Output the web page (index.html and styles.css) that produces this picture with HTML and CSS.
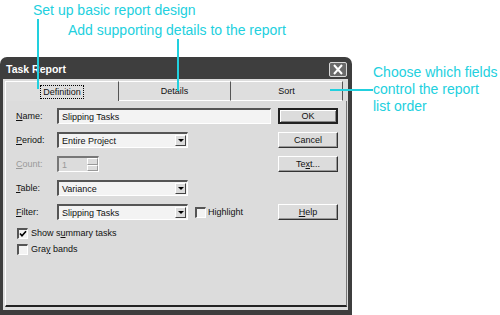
FILE: index.html
```html
<!DOCTYPE html>
<html>
<head>
	<title>Task Report</title>
	<meta charset="utf-8">
	<link rel="stylesheet" href="styles.css">
</head>
<body>
	<div class="page">
		<div class="notes">
			<p class="note note_first">Set up basic report design</p>
			<p class="note note_second">Add supporting details to the report</p>
		</div>

		<div class="main">
			<div class="dialog">
				<div class="dialog__title">
					<span>Task Report</span>
					<span class="dialog__close">
						<svg width="14" height="11" viewBox="0 0 14 11"><path d="M3 1 L11 10 M11 1 L3 10" stroke="#fff" stroke-width="2"/></svg>
					</span>
				</div>
				<div class="dialog__body">
					<div class="tabs">
						<div class="tab tab_active"><span class="tab__focus">Definition</span></div>
						<div class="tab">Details</div>
						<div class="tab">Sort</div>
					</div>
					<div class="panel">
						<div class="form">
							<label class="form__label"><span><u>N</u>ame:</span></label>
							<div class="field field_wide">Slipping Tasks</div>
							<div class="btn btn_default">OK</div>

							<label class="form__label"><span><u>P</u>eriod:</span></label>
							<div class="field field_select">Entire Project<span class="arrow"></span></div>
							<div></div>
							<div class="btn">Cancel</div>

							<label class="form__label form__label_off"><span><u>C</u>ount:</span></label>
							<div class="spin">
								<div class="spin__box">1</div>
								<div class="spin__btns"><span class="spin__up"></span><span class="spin__down"></span></div>
							</div>
							<div></div>
							<div class="btn"><span>Te<u>x</u>t...</span></div>

							<label class="form__label"><span><u>T</u>able:</span></label>
							<div class="field field_select">Variance<span class="arrow"></span></div>
							<div></div>
							<div></div>

							<label class="form__label"><span><u>F</u>ilter:</span></label>
							<div class="field field_select">Slipping Tasks<span class="arrow"></span></div>
							<div class="check check_side"><span class="check__box"></span><span>Highlight</span></div>
							<div class="btn"><span><u>H</u>elp</span></div>
						</div>

						<div class="checks">
							<div class="check"><span class="check__box check__box_on">
								<svg width="8" height="8" viewBox="0 0 8 8"><path d="M1 3.5 L3 5.8 L7 1.2" stroke="#000" stroke-width="1.6" fill="none"/></svg>
							</span><span>Show s<u>u</u>mmary tasks</span></div>
							<div class="check"><span class="check__box"></span><span>Gra<u>y</u> bands</span></div>
						</div>
					</div>
				</div>
			</div>

			<p class="note note_side">Choose which fields<br>control the report<br>list order</p>
		</div>

		<!-- callout leader lines -->
		<div class="lead lead_first"></div>
		<div class="lead lead_second"></div>
		<div class="lead lead_side"></div>
	</div>
</body>
</html>
```

FILE: styles.css
```css
* {
	box-sizing: border-box;
}
html, body {
	margin: 0;
	background: #fff;
}
.page {
	position: relative;
	width: 500px;
	height: 315px;
	overflow: hidden;
	font-family: "Liberation Sans", Arial, sans-serif;
}

.notes {
	height: 57px;
}
.note {
	margin: 0;
	color: #22d0de;
	font-size: 14px;
	line-height: 20px;
}
.note_first {
	padding-left: 33px;
}
.note_second {
	padding-left: 68px;
}
.note_side {
	margin-left: 21px;
	padding-top: 7px;
	line-height: 17px;
}

.main {
	display: flex;
}

.dialog {
	width: 352px;
	height: 258px;
	display: flex;
	flex-direction: column;
	background: #3e3e3e;
	border-radius: 7px 7px 0 0;
	padding: 0 4px 5px 3px;
}
.dialog__title {
	height: 22px;
	display: flex;
	align-items: center;
	justify-content: space-between;
	padding: 2px 0 0 3px;
	color: #fff;
	font-size: 10.5px;
	font-weight: bold;
}
.dialog__close {
	width: 18px;
	height: 15px;
	display: flex;
	align-items: center;
	justify-content: center;
	border: 1px solid #d8d8d8;
	border-radius: 2px;
	background: #6a6a6a;
	margin-right: 1px;
}
.dialog__body {
	flex: 1;
	background: #dcdcdc;
	padding: 2px 1px 3px 2px;
	display: flex;
	flex-direction: column;
	font-size: 9px;
	color: #111;
}

.tabs {
	display: flex;
	height: 20px;
	margin-right: 4px;
}
.tab {
	display: flex;
	align-items: center;
	justify-content: center;
	border-top: 1px solid #fff;
	border-right: 1px solid #555;
	border-bottom: 1px solid #fff;
	background: #dedede;
	width: 113px;
}
.tab:first-child {
	width: 115px;
	border-left: 1px solid #fff;
}
.tab_active {
	border-bottom: none;
}
.tab__focus {
	border: 1px dotted #000;
	padding: 1px 2px;
}

.panel {
	flex: 1;
	border-left: 1px solid #fff;
	border-right: 1px solid #777;
	border-bottom: 2px solid #222;
	padding: 7px 0 0 10px;
}

.form {
	display: grid;
	grid-template-columns: 41px 131px 83px 60px;
	grid-auto-rows: 16px;
	row-gap: 8px;
	column-gap: 0;
}
.form .btn {
	margin-left: 7px;
	width: 60px;
}
.form__label {
	display: flex;
	align-items: center;
}
.form__label_off {
	color: #9a9a9a;
}

.field {
	position: relative;
	display: flex;
	align-items: center;
	padding-left: 3px;
	background: #f3f3f3;
	border-top: 2px solid #555;
	border-left: 2px solid #555;
	border-right: 1px solid #fff;
	border-bottom: 1px solid #fff;
}
.field_wide {
	grid-column: span 2;
}
.arrow {
	position: absolute;
	right: 1px;
	top: 1px;
	width: 11px;
	height: 11px;
	background: #dcdcdc;
	border: 1px solid;
	border-color: #fff #444 #444 #fff;
}
.arrow:after {
	content: '';
	position: absolute;
	left: 2px;
	top: 3px;
	border-left: 3px solid transparent;
	border-right: 3px solid transparent;
	border-top: 3px solid #000;
}

.spin {
	display: flex;
	width: 42px;
}
.spin__box {
	flex: 1;
	display: flex;
	align-items: center;
	padding-left: 3px;
	color: #999;
	background: #dcdcdc;
	border-top: 2px solid #777;
	border-left: 2px solid #777;
	border-bottom: 1px solid #fff;
}
.spin__btns {
	width: 12px;
	display: flex;
	flex-direction: column;
	border-right: 1px solid #fff;
	border-top: 2px solid #777;
	border-bottom: 1px solid #fff;
}
.spin__up, .spin__down {
	flex: 1;
	border: 1px solid;
	border-color: #fff #999 #999 #fff;
}

.btn {
	display: flex;
	align-items: center;
	justify-content: center;
	background: #dcdcdc;
	border: 1px solid;
	border-color: #fff #333 #333 #fff;
	box-shadow: inset -1px -1px 0 #999;
}
.btn_default {
	border: 2px solid #222;
	box-shadow: inset 1px 1px 0 #fff, inset -1px -1px 0 #888;
}

.check {
	display: flex;
	align-items: center;
	gap: 3px;
}
.check_side {
	padding-left: 7px;
	gap: 2px;
}
.check__box {
	width: 11px;
	height: 11px;
	display: flex;
	align-items: center;
	justify-content: center;
	background: #f3f3f3;
	border-top: 2px solid #555;
	border-left: 2px solid #555;
	border-right: 1px solid #fff;
	border-bottom: 1px solid #fff;
}

.checks {
	margin-top: 7px;
	padding-left: 1px;
	display: flex;
	flex-direction: column;
	gap: 4px;
}
.checks .check {
	height: 12px;
}

.lead {
	position: absolute;
	background: #22d0de;
}
.lead_first {
	left: 37px;
	top: 19px;
	width: 2px;
	height: 70px;
}
.lead_second {
	left: 177px;
	top: 39px;
	width: 2px;
	height: 52px;
}
.lead_side {
	left: 330px;
	top: 89px;
	width: 43px;
	height: 2px;
}
```
